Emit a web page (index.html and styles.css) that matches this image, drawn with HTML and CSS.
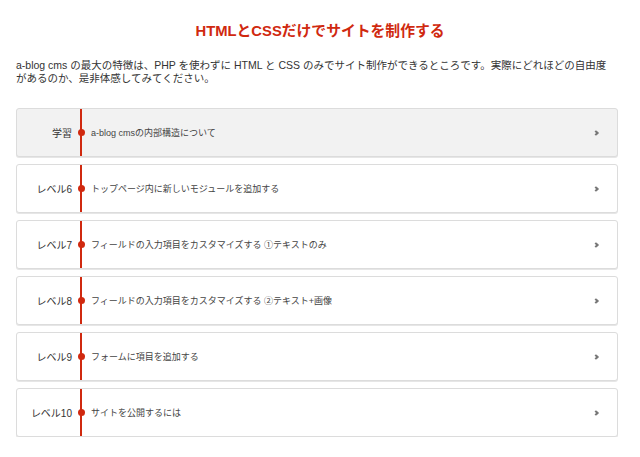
FILE: index.html
```html
<!DOCTYPE html>
<html lang="ja">
<head>
<meta charset="utf-8">
<title>HTMLとCSSだけでサイトを制作する</title>
<link rel="stylesheet" href="styles.css">
</head>
<body>
<main class="page">
  <h1 class="title">HTMLとCSSだけでサイトを制作する</h1>
  <p class="lead">a-blog cms の最大の特徴は、PHP を使わずに HTML と CSS のみでサイト制作ができるところです。実際にどれほどの自由度があるのか、是非体感してみてください。</p>
  <ul class="list">
    <li class="item is-active"><span class="label">学習</span><span class="mark"></span><span class="text">a-blog cmsの内部構造について</span><span class="chev"></span></li>
    <li class="item"><span class="label">レベル6</span><span class="mark"></span><span class="text">トップページ内に新しいモジュールを追加する</span><span class="chev"></span></li>
    <li class="item"><span class="label">レベル7</span><span class="mark"></span><span class="text">フィールドの入力項目をカスタマイズする ①テキストのみ</span><span class="chev"></span></li>
    <li class="item"><span class="label">レベル8</span><span class="mark"></span><span class="text">フィールドの入力項目をカスタマイズする ②テキスト+画像</span><span class="chev"></span></li>
    <li class="item"><span class="label">レベル9</span><span class="mark"></span><span class="text">フォームに項目を追加する</span><span class="chev"></span></li>
    <li class="item"><span class="label">レベル10</span><span class="mark"></span><span class="text">サイトを公開するには</span><span class="chev"></span></li>
  </ul>
</main>
</body>
</html>
```

FILE: styles.css
```css
* { box-sizing: border-box; }
html, body { margin: 0; padding: 0; background: #fff; }
body {
  font-family: "Liberation Sans", "Noto Sans CJK JP", sans-serif;
  color: #333;
}
.page { padding: 22px 22px 0 16px; }
.title {
  margin: 0;
  text-align: center;
  font-size: 14.8px;
  line-height: 18px;
  font-weight: bold;
  color: #d0290f;
  padding-left: 6px;
}
.lead {
  margin: 19px 0 0;
  padding-right: 8px;
  font-size: 10.5px;
  line-height: 12.5px;
  color: #333;
}
.list {
  list-style: none;
  margin: 24px 0 0;
  padding: 0;
  display: flex;
  flex-direction: column;
  gap: 7px;
}
.item {
  display: flex;
  align-items: center;
  height: 49px;
  border: 1px solid #dcdcdc;
  border-radius: 3px;
  box-shadow: 0 1px 0 #e6e6e6;
  background: #fff;
}
.item.is-active { background: #f2f2f2; }
.label {
  width: 55px;
  text-align: right;
  font-size: 10px;
  color: #333;
  flex: none;
}
.mark {
  position: relative;
  align-self: stretch;
  width: 2px;
  margin-left: 8px;
  background: #d0290f;
  flex: none;
}
.mark::after {
  content: "";
  position: absolute;
  left: -2.5px;
  top: 50%;
  width: 7px;
  height: 7px;
  margin-top: -3.5px;
  border-radius: 50%;
  background: #d0290f;
}
.text {
  flex: 1;
  margin-left: 9px;
  font-size: 9px;
  color: #444;
}
.chev {
  width: 4px;
  height: 4px;
  margin-right: 19px;
  border-top: 2px solid #777;
  border-right: 2px solid #777;
  transform: rotate(45deg);
  flex: none;
}
```
